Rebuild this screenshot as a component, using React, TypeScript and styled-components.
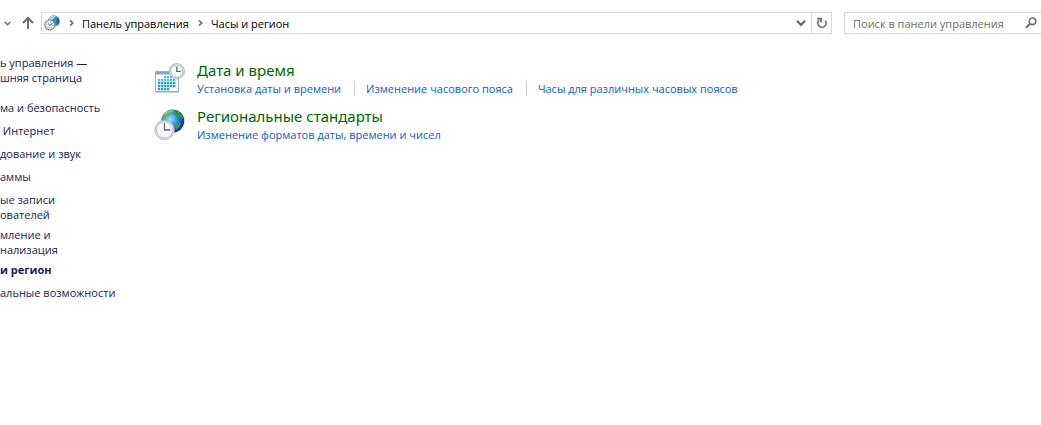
import React from "react";
import styled, { createGlobalStyle } from "styled-components";

const GlobalStyle = createGlobalStyle`
  * { box-sizing: border-box; }
  body {
    margin: 0;
    background: #fff;
    color: #000;
    font-family: "Open Sans", "Noto Sans", sans-serif;
    font-size: 11px;
    line-height: 15px;
    overflow-x: hidden;
  }
  svg { display: block; flex: none; }
`;

const Page = styled.div`
  display: flex;
  flex-direction: column;
  min-height: 100vh;
`;

const Toolbar = styled.header`
  display: flex;
  align-items: center;
  padding-top: 12px;
`;

const IconButton = styled.button<{ $width: number }>`
  display: flex;
  flex: none;
  align-items: center;
  justify-content: center;
  width: ${(p) => p.$width}px;
  height: 20px;
  padding: 0;
  border: 0;
  background: none;
  color: #6e6e6e;
`;

const AddressBar = styled.div`
  display: flex;
  flex: 1;
  align-items: center;
  height: 22px;
  border: 1px solid #d9d9d9;
  padding-left: 2px;
`;

const Crumbs = styled.nav`
  display: flex;
  flex: 1;
  align-items: center;
`;

const Crumb = styled.a`
  color: #000;
  text-decoration: none;
  white-space: nowrap;
`;

const CrumbArrow = styled.span`
  display: flex;
  justify-content: center;
  width: 22px;
  color: #6e6e6e;
`;

const RefreshCell = styled.div`
  display: flex;
  border-left: 1px solid #d9d9d9;
`;

const SearchBox = styled.label`
  display: flex;
  align-items: center;
  width: 197px;
  height: 22px;
  margin-left: 12px;
  padding-left: 8px;
  border: 1px solid #d9d9d9;
  border-right: 0;
`;

const SearchInput = styled.input`
  flex: 1;
  min-width: 0;
  padding: 0;
  border: 0;
  outline: 0;
  background: none;
  font: inherit;
  &::placeholder { color: #6d6d6d; opacity: 1; }
`;

const Body = styled.div`
  display: flex;
  padding-top: 21px;
`;

const Sidebar = styled.nav`
  display: flex;
  flex: none;
  flex-direction: column;
  width: 154px;
`;

const SideLink = styled.a<{ $gap: number; $current?: boolean }>`
  margin-bottom: ${(p) => p.$gap}px;
  color: #151c55;
  font-weight: ${(p) => (p.$current ? 700 : 400)};
  text-decoration: none;
  white-space: pre-wrap;
`;

const Main = styled.main`
  display: flex;
  flex: 1;
  flex-direction: column;
  gap: 10px;
  padding-top: 5px;
`;

const Category = styled.section`
  display: flex;
  gap: 11px;
  height: 36px;
  & > svg { margin-top: 3px; }
`;

const CategoryTitle = styled.h2`
  margin: 0 0 1px;
  font-family: "Noto Sans", "Open Sans", sans-serif;
  font-size: 15px;
  font-weight: 400;
  line-height: 20px;
`;

const TitleLink = styled.a`
  color: #006600;
  text-decoration: none;
`;

const Tasks = styled.div`
  display: flex;
`;

const TaskLink = styled.a`
  color: #0a5ccc;
  text-decoration: none;
  white-space: nowrap;
  & + & {
    margin-left: 13px;
    padding-left: 11px;
    border-left: 1px solid #cfcfcf;
  }
`;

const Chevron = ({ down, size = 8 }: { down?: boolean; size?: number }) => (
  <svg width={size} height={size} viewBox="0 0 8 8" fill="none" stroke="currentColor" strokeWidth="1.7">
    <path d={down ? "M0.7 2.2 4 5.5 7.3 2.2" : "M3 1.4 5.7 4 3 6.6"} />
  </svg>
);

const UpArrow = () => (
  <svg width="14" height="14" viewBox="0 0 14 14" fill="none" stroke="currentColor" strokeWidth="2">
    <path d="M7 13V2M2 7 7 2l5 5" />
  </svg>
);

const Refresh = () => (
  <svg width="12" height="12" viewBox="0 0 12 12" fill="none" stroke="currentColor" strokeWidth="1.7">
    <path d="M3.2 3.1A4.1 4.1 0 1 0 9.3 3.7M1 1.6H5V5.4" />
  </svg>
);

const Magnifier = () => (
  <svg width="12" height="12" viewBox="0 0 12 12" fill="none" stroke="currentColor" strokeWidth="1.6">
    <circle cx="7.5" cy="4.3" r="3.3" />
    <path d="M5 6.8 1 10.8" strokeWidth="2" />
  </svg>
);

const ClockFace = ({ cx, cy, r }: { cx: number; cy: number; r: number }) => (
  <g>
    <circle cx={cx} cy={cy} r={r} fill="#d5dadd" stroke="#b0b7bb" strokeWidth="0.8" />
    <circle cx={cx} cy={cy} r={r - 1.8} fill="#f8fafb" stroke="#b9c0c4" strokeWidth="0.8" />
    <circle cx={cx} cy={cy} r={r - 2.9} fill="none" stroke="#bcc5ca" strokeWidth="0.8" strokeDasharray="0.7 2.2" />
    <path d={`M${cx} ${cy - r + 3}V${cy}H${cx + r - 4}`} fill="none" stroke="#59636b" strokeWidth="1.3" />
  </g>
);

const Globe = ({ id }: { id: string }) => (
  <g>
    <defs>
      <radialGradient id={id} cx="38%" cy="42%" r="66%">
        <stop offset="0" stopColor="#9be4ff" />
        <stop offset="0.5" stopColor="#2f86e6" />
        <stop offset="1" stopColor="#0a239c" />
      </radialGradient>
    </defs>
    <circle cx="18.8" cy="12" r="11.5" fill={`url(#${id})`} />
    <path d="M8.6 7C10 4 13 1.6 16.5 1l3.2.6-1.2 2.2-3 .6-.4 2-3 1.2-1.4 2.6-2.2.2z" fill="#56b54a" />
    <path d="M20.5 2 23 1.4c3.2 1.4 5.4 3.6 6.6 7l-1.6 1.8-2.2-1.4-1.8.6-1.4-2.6-2.6-1.2 1.2-1.8z" fill="#2e9440" />
    <path d="M21 13.4l3.4-.6 2.4 1.6-1.6 3.4-2.6 2.8-1.6-2.6z" fill="#35a05a" />
    <path d="M10 4.5c3-3 8-4 12-2.4-4 0-8 1.4-11 4.6z" fill="#fff" opacity="0.3" />
  </g>
);

const DateTimeIcon = () => (
  <svg width="32" height="32" viewBox="0 0 32 32">
    <path d="M1.5 8.5H24.5V28.5H1.5z" fill="#fafcfd" stroke="#a3adb3" />
    <path d="M2 9H24V11.5H2z" fill="#7fa9c4" />
    {[0, 1, 2, 3, 4].map((row) =>
      [0, 1, 2, 3, 4, 5].map((col) =>
        (row === 0 && col < 2) || (row === 4 && col > 3) ? null : (
          <rect key={`${row}-${col}`} x={4 + col * 3} y={13 + row * 3} width="2.3" height="2.3" fill={row < 2 ? "#45c0e8" : "#25a0d2"} />
        ),
      ),
    )}
    <path d="M2 29.5H25" stroke="#c9cfd3" />
    <ClockFace cx={22.8} cy={8.3} r={7.8} />
  </svg>
);

const RegionIcon = () => (
  <svg width="32" height="32" viewBox="0 0 32 32">
    <Globe id="globe-large" />
    <ClockFace cx={10.5} cy={21} r={9.8} />
  </svg>
);

const LocationIcon = () => (
  <svg width="16" height="16" viewBox="0 0 16 16">
    <circle cx="9.8" cy="6" r="5.8" fill="#3d93bd" />
    <path d="M5 3C7 .6 10 0 12 1L8.6 4.4 5 6z" fill="#a7d7ea" />
    <path d="M13.2 2.2c2 1.4 2.8 4 2 6.4l-1.8 2.2-1-4z" fill="#1d6692" />
    <circle cx="5.8" cy="10" r="5" fill="#eef1f2" stroke="#858e93" strokeWidth="1.2" />
    <circle cx="5.8" cy="10" r="3.2" fill="none" stroke="#8b9499" strokeWidth="0.9" strokeDasharray="1 1.5" />
    <path d="M4 8.6 5.8 10.3 8 8.8" fill="none" stroke="#525d63" />
  </svg>
);

const sideLinks = [
  { label: "ь управления —\nшняя страница", gap: 15 },
  { label: "ма и безопасность", gap: 8 },
  { label: " Интернет", gap: 8 },
  { label: "дование и звук", gap: 8 },
  { label: "аммы", gap: 8 },
  { label: "ые записи\nователей", gap: 5 },
  { label: "мление и\nнализация", gap: 5 },
  { label: "и регион", gap: 8, current: true },
  { label: "альные возможности", gap: 8 },
];

const categories = [
  {
    title: "Дата и время",
    icon: <DateTimeIcon />,
    tasks: ["Установка даты и времени", "Изменение часового пояса", "Часы для различных часовых поясов"],
  },
  {
    title: "Региональные стандарты",
    icon: <RegionIcon />,
    tasks: ["Изменение форматов даты, времени и чисел"],
  },
];

export default function App() {
  return (
    <>
      <GlobalStyle />
      <Page>
        <Toolbar>
          <IconButton $width={15} aria-label="Последние расположения">
            <Chevron down size={7} />
          </IconButton>
          <IconButton $width={26} aria-label="Вверх">
            <UpArrow />
          </IconButton>
          <AddressBar>
            <LocationIcon />
            <Crumbs>
              <CrumbArrow><Chevron /></CrumbArrow>
              <Crumb href="#panel">Панель управления</Crumb>
              <CrumbArrow><Chevron /></CrumbArrow>
              <Crumb href="#clock">Часы и регион</Crumb>
            </Crumbs>
            <IconButton $width={20} aria-label="Предыдущие расположения">
              <Chevron down size={10} />
            </IconButton>
            <RefreshCell>
              <IconButton $width={19} aria-label="Обновить">
                <Refresh />
              </IconButton>
            </RefreshCell>
          </AddressBar>
          <SearchBox>
            <SearchInput type="text" placeholder="Поиск в панели управления" aria-label="Поиск в панели управления" />
            <IconButton $width={20} aria-label="Найти">
              <Magnifier />
            </IconButton>
          </SearchBox>
        </Toolbar>
        <Body>
          <Sidebar>
            {sideLinks.map((link) => (
              <SideLink key={link.label} href="#" $gap={link.gap} $current={link.current}>
                {link.label}
              </SideLink>
            ))}
          </Sidebar>
          <Main>
            {categories.map((category) => (
              <Category key={category.title}>
                {category.icon}
                <div>
                  <CategoryTitle>
                    <TitleLink href="#">{category.title}</TitleLink>
                  </CategoryTitle>
                  <Tasks>
                    {category.tasks.map((task) => (
                      <TaskLink key={task} href="#">{task}</TaskLink>
                    ))}
                  </Tasks>
                </div>
              </Category>
            ))}
          </Main>
        </Body>
      </Page>
    </>
  );
}
